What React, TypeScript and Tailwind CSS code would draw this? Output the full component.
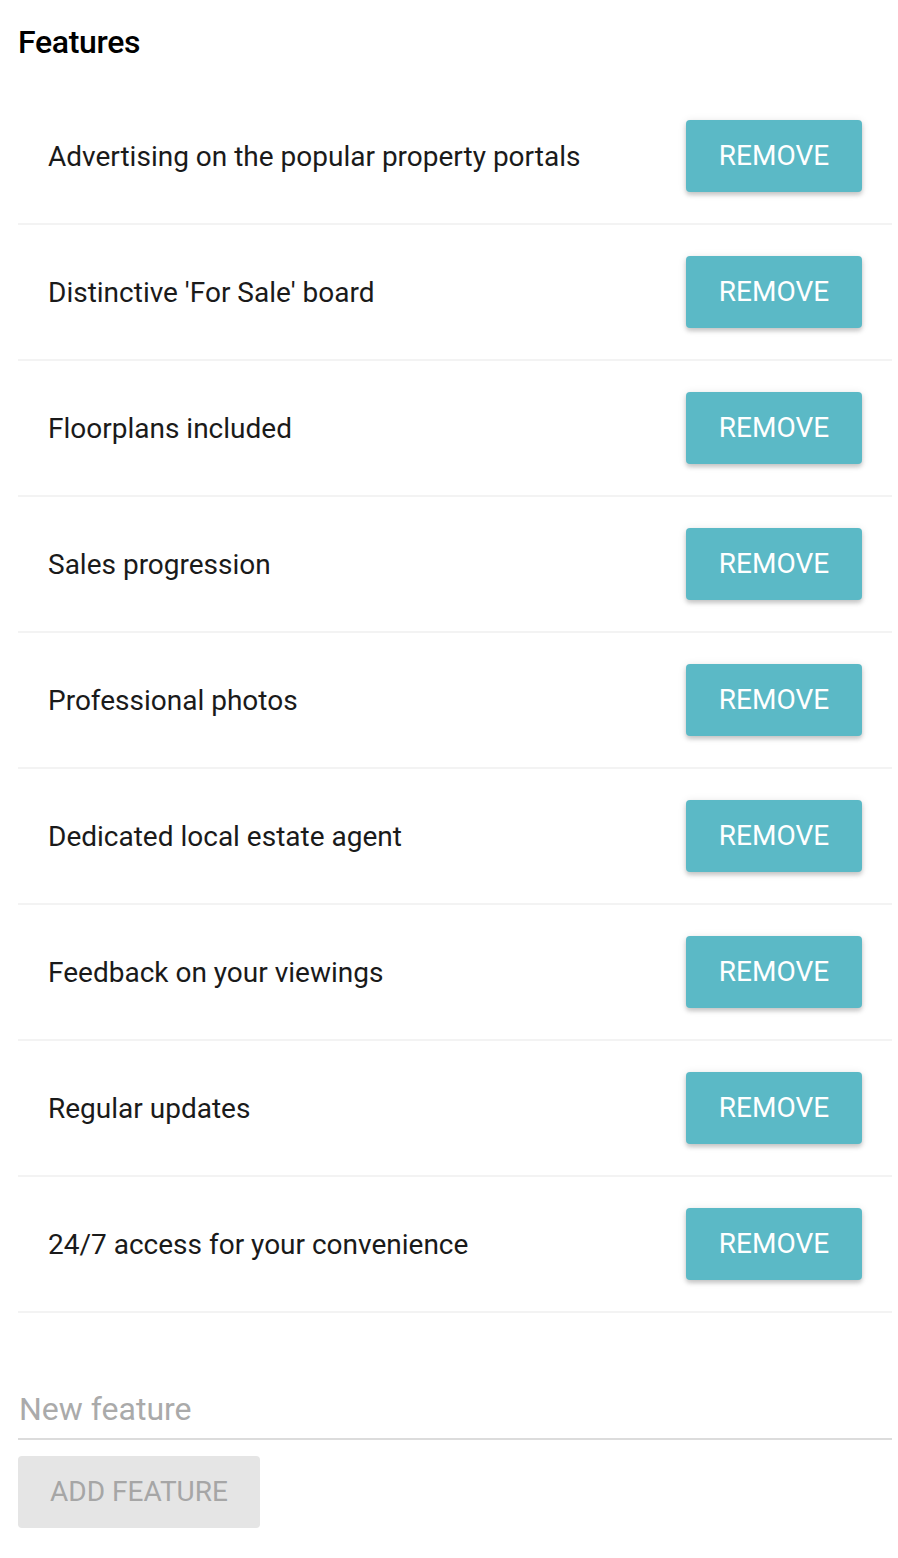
const features = [
  'Advertising on the popular property portals',
  "Distinctive 'For Sale' board",
  'Floorplans included',
  'Sales progression',
  'Professional photos',
  'Dedicated local estate agent',
  'Feedback on your viewings',
  'Regular updates',
  '24/7 access for your convenience',
];

export default function App() {
  return (
    <div className="min-h-[1558px] bg-white px-[18px] pt-[22px] font-['Roboto',sans-serif] text-[#111]">
      <h2 className="text-[32px] font-medium leading-[40px] tracking-[-0.01em] text-black">Features</h2>

      {/* Feature list */}
      <ul className="mt-[27px] w-[874px]">
        {features.map((f) => (
          <li
            key={f}
            className="flex h-[136px] items-center justify-between border-b-2 border-[#f3f3f3] pl-[30px] pr-[30px]"
          >
            <span className="pt-[2px] text-[28px] leading-[32px] text-[#1a1a1a]">{f}</span>
            <button className="h-[72px] w-[176px] rounded-[4px] bg-[#5bb9c6] text-[28px] uppercase text-white shadow-[0_3px_4px_rgba(0,0,0,0.18),0_1px_8px_rgba(0,0,0,0.1)]">
              Remove
            </button>
          </li>
        ))}
      </ul>

      {/* New feature input */}
      <div className="mt-[67px] w-[874px]">
        <input
          placeholder="New feature"
          className="h-[60px] w-full border-b-2 border-[#dcdcdc] bg-transparent px-[1px] text-[32px] outline-none placeholder:text-[#aaaaaa]"
        />
        <button
          disabled
          className="mt-[16px] h-[72px] w-[242px] rounded-[4px] bg-[#e5e5e5] text-[28px] uppercase text-[#a6a6a6]"
        >
          Add feature
        </button>
      </div>
    </div>
  );
}
